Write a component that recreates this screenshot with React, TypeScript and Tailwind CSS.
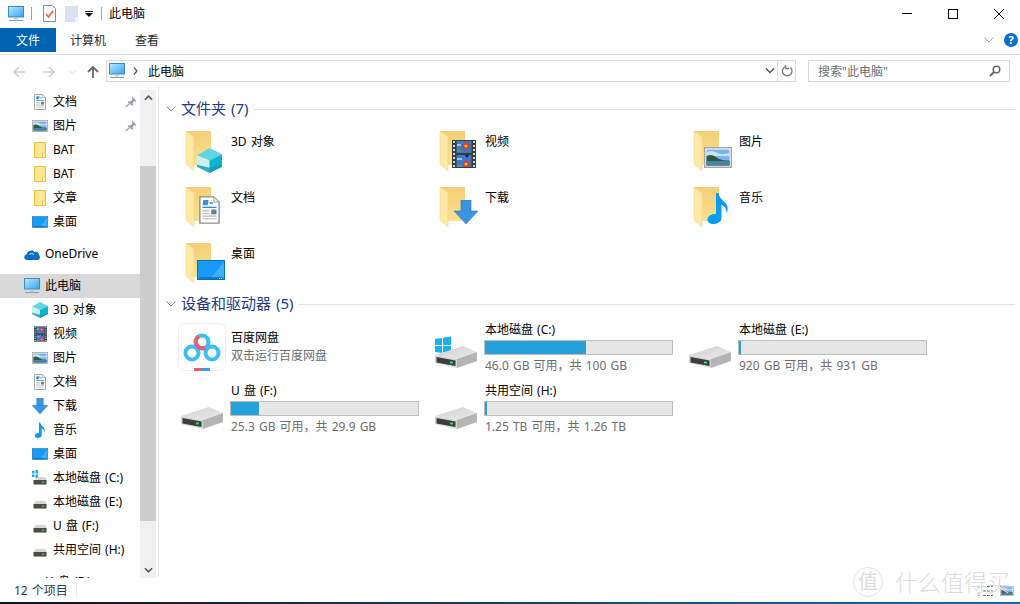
import { ReactNode } from "react";

const Monitor = () => (
  <svg viewBox="0 0 16 16" className="w-4 h-4 shrink-0">
    <rect x="0.5" y="0.5" width="15" height="10.5" fill="url(#screen)" stroke="#3a8cc4" />
    <rect x="6" y="11.5" width="4" height="2" fill="#b9c6d0" />
    <rect x="1" y="14" width="14" height="1" fill="#7f9db3" />
  </svg>
);

const Doc = () => (
  <svg viewBox="0 0 24 32" width="100%" height="100%">
    <path d="M1 1h16l6 6v24H1z" fill="#fff" stroke="#8f8f8f" strokeWidth="1.6" />
    <path d="M17 1v6h6" fill="#e4e4e4" stroke="#a0a0a0" />
    <path d="M5 4.5h6l-1 6H4z" fill="#3f8fd6" />
    <path d="M12 8h4M4 13h16" stroke="#2f86d0" strokeWidth="1.5" />
    <path d="M4 17h8M4 20h8M4 23h16M4 26h16" stroke="#b5b5b5" strokeWidth="1.3" />
    <rect x="14" y="15.5" width="6" height="5.5" fill="#5f8298" />
  </svg>
);

const Picture = () => (
  <svg viewBox="0 0 28 21" width="100%" height="100%">
    <rect x="0.7" y="0.7" width="26.6" height="19.6" fill="#fff" stroke="#a5a5a5" strokeWidth="1.4" />
    <rect x="2.5" y="2.5" width="23" height="16" fill="#79b4ee" />
    <path d="M2.5 5c4-2 8-1 11 1s8 1 12 0v3h-23z" fill="#cde3f5" />
    <path d="M2.5 9c4-2 7-1 10 1.5s8 3 13 3v5h-23z" fill="#2f5a3e" />
    <rect x="2.5" y="14" width="23" height="4.5" fill="#4c84a8" />
  </svg>
);

const Desktop = () => (
  <svg viewBox="0 0 28 20" width="100%" height="100%">
    <rect x="0.5" y="0.5" width="27" height="19" fill="#169bf8" stroke="#0d6fb0" />
    <path d="M14 18L27 2v16z" fill="#3db0fb" />
    <path d="M2 18h24" stroke="#0d6fb0" strokeWidth="1.5" />
    <path d="M22 18.5h4" stroke="#e8f6ff" strokeDasharray="1 1" />
  </svg>
);

const Cube = () => (
  <svg viewBox="0 0 24 24" width="100%" height="100%">
    <path d="M12 0L24 6 12 12 0 7z" fill="#5fd4e2" />
    <path d="M0 7l12 5v12L0 18z" fill="#c9eff3" />
    <path d="M24 6v12l-12 6V12z" fill="#10b4cf" />
    <path d="M0 16l12 3 12-3v2l-12 6-12-6z" fill="#0a9ab5" opacity="0.8" />
  </svg>
);

const Film = () => (
  <svg viewBox="0 0 24 28" width="100%" height="100%">
    <rect width="24" height="28" fill="#3a3a3a" />
    <path d="M1 2h2M1 6h2M1 10h2M1 14h2M1 18h2M1 22h2M1 26h2M21 2h2M21 6h2M21 10h2M21 14h2M21 18h2M21 22h2M21 26h2" stroke="#d5d5d5" strokeWidth="2" />
    <rect x="4.5" y="1" width="15" height="12" fill="#3a78c8" />
    <rect x="4.5" y="15" width="15" height="12" fill="#3a78c8" />
    <circle cx="14" cy="6" r="3.5" fill="#d83a2e" />
    <circle cx="14" cy="6" r="1.6" fill="#f2c21d" />
    <circle cx="14" cy="24" r="3.2" fill="#d83a2e" />
    <circle cx="14" cy="24" r="1.5" fill="#f2c21d" />
    <path d="M5 5h4M5 19h5" stroke="#9cc9ea" strokeWidth="2" />
    <path d="M5 11h4M5 26h5" stroke="#6f9c55" strokeWidth="1.5" />
    <path d="M13 15l2 3 2-3z" fill="#222" />
  </svg>
);

const DownArrow = () => (
  <svg viewBox="0 0 24 24" width="100%" height="100%">
    <path d="M7 0h10v11h7L12 24 0 11h7z" fill="#3b93e3" stroke="#2a78c4" strokeWidth="0.6" />
  </svg>
);

const Note = () => (
  <svg viewBox="0 0 22 32" width="100%" height="100%">
    <path d="M9 1h2.5c.5 4 3 6 6 9 3.500 3.500 4 7 2 12 .5-4-1-7-5-9.500V26c0 3.500-3.500 6-8 6-4 0-6-2-6-4.500C.5 24 4.500 21.500 9 22z" fill="#0a9cf0" />
  </svg>
);

const SmallFolder = () => (
  <svg viewBox="0 0 16 16" className="w-4 h-4 shrink-0">
    <rect x="2.5" y="0.5" width="11" height="15" fill="#ffe696" stroke="#efc23f" />
    <path d="M10.500 11h3v4.500h-3z" fill="#fff3c4" stroke="#efc23f" />
  </svg>
);

const SmallDrive = () => (
  <svg viewBox="0 0 16 16" className="w-4 h-4 shrink-0">
    <path d="M2 10l2-3h9l2 3z" fill="#d5d5d5" />
    <rect x="1.500" y="10" width="13" height="4" fill="#4a4a4a" />
    <rect x="1.500" y="14" width="13" height="1" fill="#9a9a9a" />
    <rect x="10" y="11.500" width="2" height="1.500" fill="#3fd25b" />
  </svg>
);

const SmallWinDrive = () => (
  <svg viewBox="0 0 16 16" className="w-4 h-4 shrink-0">
    <path d="M0 1h2.500v2.500H0zM3.500 0H6v3.500H3.500zM0 4.500h2.500V7H0zM3.500 4.500H6V8H3.500z" fill="#17a5e8" />
    <path d="M4 9l1-2h8l2 3v0H3z" fill="#d5d5d5" />
    <rect x="1.500" y="10" width="13" height="4" fill="#4a4a4a" />
    <rect x="1.500" y="14" width="13" height="1" fill="#9a9a9a" />
    <rect x="10" y="11.500" width="2" height="1.500" fill="#3fd25b" />
  </svg>
);

const Cloud = () => (
  <svg viewBox="0 0 16 16" className="w-4 h-4 shrink-0">
    <path d="M3 14c-3.500 0-3.500-5-.5-5.500C3.500 5 8 3 10.500 6c2-1 4.500 0 4.500 3 1.500 1 1 5-1 5z" fill="#0a6fc4" />
    <path d="M5.500 9C6.500 7 9 7 10 9" stroke="#fff" fill="none" />
  </svg>
);

const Pin = () => (
  <svg viewBox="0 0 12 12" className="w-3 h-3 shrink-0">
    <path d="M7 .5l4.500 4.500-1 .5-1-.5-2 2 .5 2-1 1L2.500 6l1-1 2 .5 2-2-.5-1z" fill="#9a9fa6" />
    <path d="M4 8L1 11" stroke="#9a9fa6" strokeWidth="1.200" />
  </svg>
);

const Box = ({ w, h, children }: { w: string; h: string; children: ReactNode }) => (
  <span className="flex items-center justify-center shrink-0 w-4 h-4">
    <span className={`block ${w} ${h}`}>{children}</span>
  </span>
);

const navItems: { label: string; icon: ReactNode; pin?: boolean }[] = [
  { label: "文档", icon: <Box w="w-3" h="h-4"><Doc /></Box>, pin: true },
  { label: "图片", icon: <Box w="w-4" h="h-3"><Picture /></Box>, pin: true },
  { label: "BAT", icon: <SmallFolder /> },
  { label: "BAT", icon: <SmallFolder /> },
  { label: "文章", icon: <SmallFolder /> },
  { label: "桌面", icon: <Box w="w-4" h="h-3"><Desktop /></Box> },
];

const pcItems: { label: string; icon: ReactNode }[] = [
  { label: "3D 对象", icon: <Cube /> },
  { label: "视频", icon: <Box w="w-[13px]" h="h-4"><Film /></Box> },
  { label: "图片", icon: <Box w="w-4" h="h-3"><Picture /></Box> },
  { label: "文档", icon: <Box w="w-3" h="h-4"><Doc /></Box> },
  { label: "下载", icon: <DownArrow /> },
  { label: "音乐", icon: <Box w="w-3" h="h-4"><Note /></Box> },
  { label: "桌面", icon: <Box w="w-4" h="h-3"><Desktop /></Box> },
  { label: "本地磁盘 (C:)", icon: <SmallWinDrive /> },
  { label: "本地磁盘 (E:)", icon: <SmallDrive /> },
  { label: "U 盘 (F:)", icon: <SmallDrive /> },
  { label: "共用空间 (H:)", icon: <SmallDrive /> },
];

function NavRow({ label, icon, pin }: { label: string; icon: ReactNode; pin?: boolean }) {
  return (
    <div className="h-6 flex items-center pl-8 shrink-0 text-black">
      <span className="block w-4 h-4 shrink-0">{icon}</span>
      <span className="ml-[5px] whitespace-nowrap">{label}</span>
      {pin && <span className="ml-auto mr-[3px]"><Pin /></span>}
    </div>
  );
}

function Sidebar() {
  return (
    <div className="w-[159px] shrink-0 flex border-r border-[#e6e6e6] overflow-hidden">
      <div className="w-[140px] shrink-0 flex flex-col pt-[4px] overflow-hidden">
        {navItems.map((item, i) => <NavRow key={i} {...item} />)}
        <div className="h-6 mt-2 flex items-center pl-6 shrink-0 text-black">
          <Cloud />
          <span className="ml-[5px]">OneDrive</span>
        </div>
        <div className="h-6 mt-2 flex items-center pl-6 shrink-0 bg-[#d9d9d9] text-black">
          <Monitor />
          <span className="ml-[5px]">此电脑</span>
        </div>
        {pcItems.map((item, i) => <NavRow key={i} {...item} />)}
        <div className="h-6 mt-2 flex items-center pl-6 shrink-0 text-black">
          <SmallDrive />
          <span className="ml-[5px]">U 盘 (F:)</span>
        </div>
      </div>
      <div className="w-[16px] mt-[4px] bg-[#f0f0f0] flex flex-col shrink-0">
        <div className="h-4 flex items-center justify-center">
          <svg viewBox="0 0 10 6" className="w-[9px] h-[6px]"><path d="M1 5l4-4 4 4" fill="none" stroke="#555" strokeWidth="1.800" /></svg>
        </div>
        <div className="h-[60px]" />
        <div className="h-[355px] bg-[#cdcdcd]" />
        <div className="flex-1" />
        <div className="h-[17px] flex items-center justify-center">
          <svg viewBox="0 0 10 6" className="w-[9px] h-[6px]"><path d="M1 1l4 4 4-4" fill="none" stroke="#555" strokeWidth="1.800" /></svg>
        </div>
      </div>
    </div>
  );
}

function BigFolder({ children }: { children: ReactNode }) {
  return (
    <div className="relative w-[48px] h-[48px] shrink-0">
      <svg viewBox="0 0 48 48" className="absolute inset-0 w-full h-full">
        <path d="M8 3h25v34H16z" fill="url(#folderBack)" />
        <path d="M8 3l8 6v34l-8-7z" fill="#ffe9a6" />
        <path d="M8 3l8 6v34l-8-7z" fill="none" stroke="#f3d27f" strokeWidth="0.500" />
      </svg>
      {children}
    </div>
  );
}

const folders: { label: string; overlay: ReactNode }[] = [
  { label: "3D 对象", overlay: <div className="absolute left-[19px] top-[20px] w-[25px] h-[25px]"><Cube /></div> },
  { label: "视频", overlay: <div className="absolute left-[20px] top-[12px] w-[24px] h-[28px]"><Film /></div> },
  { label: "图片", overlay: <div className="absolute left-[18px] top-[19px] w-[28px] h-[21px]"><Picture /></div> },
  { label: "文档", overlay: <div className="absolute left-[21px] top-[12px] w-[21px] h-[28px]"><Doc /></div> },
  { label: "下载", overlay: <div className="absolute left-[22px] top-[16px] w-[24px] h-[24px]"><DownArrow /></div> },
  { label: "音乐", overlay: <div className="absolute left-[21px] top-[8px] w-[22px] h-[32px]"><Note /></div> },
  { label: "桌面", overlay: <div className="absolute left-[19px] top-[20px] w-[28px] h-[20px]"><Desktop /></div> },
];

function BigDrive({ win }: { win?: boolean }) {
  return (
    <svg viewBox="0 0 48 48" className="w-[48px] h-[48px] shrink-0">
      {win && (
        <path d="M3 7l7-1v7H3zM11 5.800l8-1.300V13h-8zM3 14h7v7l-7-1zM11 14h8v8.500l-8-1.300z" fill="#17b0ee" />
      )}
      <path d="M3 23l28-9 14 6-20 7z" fill="url(#driveTop)" />
      <path d="M25 27l20-7v9l-20 7z" fill="#b4b4b4" />
      <path d="M3 23l22 4v9L3 31z" fill="#d6d6d6" />
      <path d="M4.500 25l19 3.500v5.500l-19-3.500z" fill="#3d3d3d" />
      <rect x="18" y="29.500" width="3" height="2" fill="#3fe05f" />
    </svg>
  );
}

const drives = [
  { name: "本地磁盘 (C:)", used: 101, info: "46.0 GB 可用，共 100 GB", win: true },
  { name: "本地磁盘 (E:)", used: 2, info: "920 GB 可用，共 931 GB" },
  { name: "U 盘 (F:)", used: 28, info: "25.3 GB 可用，共 29.9 GB" },
  { name: "共用空间 (H:)", used: 2, info: "1.25 TB 可用，共 1.26 TB" },
];

function DriveTile({ name, used, info, win }: { name: string; used: number; info: string; win?: boolean }) {
  return (
    <div className="flex h-[61px]">
      <div className="w-[52px] pt-[12px] shrink-0"><BigDrive win={win} /></div>
      <div className="flex flex-col pt-[2px]">
        <div className="h-4 leading-4 text-black pl-px whitespace-nowrap">{name}</div>
        <div className="w-[189px] h-[15px] mt-[2px] bg-[#e6e6e6] border border-[#bcbcbc] overflow-hidden">
          <div className="h-full bg-[#26a0da]" style={{ width: used }} />
        </div>
        <div className="h-4 leading-4 mt-[3px] text-[#6d6d6d] pl-px whitespace-nowrap">{info}</div>
      </div>
    </div>
  );
}

function GroupHeader({ title }: { title: string }) {
  return (
    <div className="h-[22px] flex items-center pl-[7px] pr-[5px]">
      <svg viewBox="0 0 10 6" className="w-[10px] h-[6px] shrink-0">
        <path d="M.5 .5L5 5 9.500 .5" fill="none" stroke="#8a8a8a" />
      </svg>
      <span className="ml-[5px] pb-[2px] text-[15px] text-[#1e3a8a] whitespace-nowrap">{title}</span>
      <div className="ml-[5px] flex-1 h-px bg-[#e2e2e2]" />
    </div>
  );
}

function Baidu() {
  return (
    <svg viewBox="0 0 48 48" className="w-[48px] h-[48px] shrink-0">
      <rect x="0.500" y="0.500" width="47" height="47" rx="6" fill="#fff" stroke="#efefef" />
      <circle cx="14" cy="30" r="6.500" fill="none" stroke="#3fbdf6" strokeWidth="4" />
      <circle cx="34" cy="30" r="6.500" fill="none" stroke="#3fbdf6" strokeWidth="4" />
      <circle cx="24" cy="19" r="6.500" fill="none" stroke="#3fbdf6" strokeWidth="4" />
      <path d="M20.750 13.400A6.500 6.500 0 0 0 27.250 24.600" fill="none" stroke="#f3586b" strokeWidth="4" />
      <rect x="16" y="45" width="8" height="3" fill="#f3586b" />
      <rect x="24" y="45" width="8" height="3" fill="#2fa0f0" />
    </svg>
  );
}

function Main() {
  return (
    <div className="flex-1 flex flex-col pt-[12px] overflow-hidden">
      <GroupHeader title="文件夹 (7)" />
      <div className="mt-[4px] ml-[19px] grid grid-cols-[254px_254px_254px] auto-rows-[56px]">
        {folders.map((f) => (
          <div key={f.label} className="flex pt-[4px]">
            <BigFolder>{f.overlay}</BigFolder>
            <span className="ml-[5px] text-black leading-4 mt-[6px]">{f.label}</span>
          </div>
        ))}
      </div>
      <div className="mt-px">
        <GroupHeader title="设备和驱动器 (5)" />
      </div>
      <div className="mt-[5px] ml-[19px] grid grid-cols-[254px_254px_254px] auto-rows-[61px]">
        <div className="flex pt-[3px]">
          <Baidu />
          <div className="ml-[5px] flex flex-col pt-[7px]">
            <span className="leading-4 text-black">百度网盘</span>
            <span className="leading-4 mt-[2px] text-[#6d6d6d]">双击运行百度网盘</span>
          </div>
        </div>
        {drives.map((d) => <DriveTile key={d.name} {...d} />)}
      </div>
    </div>
  );
}

export default function App() {
  return (
    <div className="relative w-[1020px] h-[604px] bg-white flex flex-col overflow-hidden text-[12px] [word-spacing:1px] font-['Noto_Sans','Noto_Sans_CJK_SC',sans-serif]">
      <svg className="absolute w-0 h-0">
        <defs>
          <linearGradient id="screen" x1="0" y1="0" x2="1" y2="1">
            <stop offset="0" stopColor="#bfe8ff" />
            <stop offset="1" stopColor="#2fa4f0" />
          </linearGradient>
          <linearGradient id="folderBack" x1="0" y1="0" x2="0" y2="1">
            <stop offset="0" stopColor="#f3cf76" />
            <stop offset="1" stopColor="#fbe08f" />
          </linearGradient>
          <linearGradient id="driveTop" x1="0" y1="0" x2="1" y2="1">
            <stop offset="0" stopColor="#cfcfcf" />
            <stop offset="1" stopColor="#ececec" />
          </linearGradient>
        </defs>
      </svg>

      {/* title bar */}
      <div className="h-[27px] flex items-center shrink-0 pl-2">
        <Monitor />
        <div className="ml-[7px] w-px h-[13px] bg-[#a0a0a0]" />
        <svg viewBox="0 0 13 17" className="ml-[11px] w-[13px] h-[17px]">
          <path d="M.5 .5h9l3 3v13H.5z" fill="#fff" stroke="#8a8a8a" />
          <path d="M3 9l2.500 3L10 6" fill="none" stroke="#e8602c" strokeWidth="1.500" />
        </svg>
        <svg viewBox="0 0 13 16" className="ml-[9px] w-[13px] h-4">
          <path d="M0 0h13v16H0z" fill="#d8e3f2" />
          <path d="M10 11h3v5h-3z" fill="#f1f5fa" />
        </svg>
        <svg viewBox="0 0 8 6" className="ml-[7px] w-2 h-[6px]">
          <path d="M0 0h8v1H0zM0 2h8L4 6z" fill="#111" />
        </svg>
        <div className="ml-2 w-px h-[13px] bg-[#a0a0a0]" />
        <span className="ml-[7px] text-black">此电脑</span>
        <div className="ml-auto -mr-[2px] flex items-center h-full">
          <div className="w-[46px] flex justify-center"><div className="w-[10px] h-px bg-black" /></div>
          <div className="w-[46px] flex justify-center"><div className="w-[10px] h-[10px] border border-black" /></div>
          <div className="w-[46px] flex justify-center">
            <svg viewBox="0 0 10 10" className="w-[10px] h-[10px]"><path d="M0 0l10 10M10 0L0 10" stroke="#000" /></svg>
          </div>
        </div>
      </div>

      {/* ribbon tabs */}
      <div className="h-[28px] shrink-0 flex items-start border-b border-[#dadbdc] pt-px relative">
        <div className="w-[56px] h-[24px] bg-[#0063b1] text-white flex items-center justify-center pt-px">文件</div>
        <span className="ml-[14px] h-[24px] leading-[26px] text-[#262626]">计算机</span>
        <span className="ml-[29px] h-[24px] leading-[26px] text-[#262626]">查看</span>
        <div className="ml-auto flex items-center h-[24px] pr-[2px]">
          <svg viewBox="0 0 10 6" className="w-[10px] h-[6px]"><path d="M.5 .5L5 5 9.500 .5" fill="none" stroke="#a5a5a5" /></svg>
          <div className="ml-[10px] w-[14px] h-[14px] rounded-full bg-[#0a6fc9] text-white text-[11px] font-bold leading-[14px] text-center">?</div>
        </div>
      </div>

      {/* address bar */}
      <div className="h-[31px] shrink-0 flex items-start pt-[5px]">
        <div className="w-[106px] h-[22px] shrink-0 flex items-center pt-[2px]">
          <svg viewBox="0 0 12 12" className="ml-[13px] w-3 h-3"><path d="M12 6H1M6 1L1 6l5 5" fill="none" stroke="#cfcfcf" strokeWidth="1.600" /></svg>
          <svg viewBox="0 0 12 12" className="ml-[18px] w-3 h-3"><path d="M0 6h11M6 1l5 5-5 5" fill="none" stroke="#cfcfcf" strokeWidth="1.600" /></svg>
          <svg viewBox="0 0 8 5" className="ml-[14px] w-[7px] h-[5px]"><path d="M.5 .5L4 4 7.500 .5" fill="none" stroke="#cfcfcf" /></svg>
          <svg viewBox="0 0 12 12" className="ml-[11px] w-3 h-3"><path d="M6 12V1M1 6l5-5 5 5" fill="none" stroke="#6b6b6b" strokeWidth="1.800" /></svg>
        </div>
        <div className="w-[690px] h-[22px] border border-[#d9d9d9] flex items-center pl-[2px] shrink-0">
          <Monitor />
          <svg viewBox="0 0 5 8" className="ml-2 w-[5px] h-2"><path d="M1 .5L4 4 1 7.500" fill="none" stroke="#555" strokeWidth="1.200" /></svg>
          <span className="ml-[10px] pt-px text-black">此电脑</span>
          <svg viewBox="0 0 10 6" className="ml-auto w-[10px] h-[6px]"><path d="M1 .5L5 4.500 9 .5" fill="none" stroke="#555" strokeWidth="1.500" /></svg>
          <div className="ml-[2px] w-px h-full bg-[#d9d9d9]" />
          <svg viewBox="0 0 12 12" className="ml-[3px] mr-[2px] w-3 h-3">
            <path d="M9.500 2.500A4.800 4.800 0 1 1 4.500 1.500M4.500 0v3.500H8" fill="none" stroke="#777" strokeWidth="1.300" />
          </svg>
        </div>
        <div className="ml-3 w-[202px] h-[22px] border border-[#d9d9d9] flex items-center pl-[9px] shrink-0 text-[#6d6d6d]">
          <span className="pt-px">搜索"此电脑"</span>
          <svg viewBox="0 0 12 12" className="ml-auto mr-2 w-3 h-3">
            <circle cx="7.500" cy="4.500" r="3.300" fill="none" stroke="#666" strokeWidth="1.500" />
            <path d="M5 7l-4 4" stroke="#666" strokeWidth="2" />
          </svg>
        </div>
      </div>

      {/* body */}
      <div className="flex-1 flex min-h-0">
        <Sidebar />
        <Main />
      </div>

      {/* status bar */}
      <div className="h-[24px] shrink-0 flex items-center pl-[14px] text-[#1e395b]">
        <span className="pt-[2px]">12 个项目</span>
        <div className="ml-[8px] w-px h-[16px] bg-[#eeeeee]" />
        <div className="ml-auto flex items-center pr-[6px] pt-px">
          <svg viewBox="0 0 16 12" className="w-4 h-3">
            <rect x="0" y="0.500" width="3" height="3" fill="#cfe0f0" />
            <rect x="0" y="8" width="3" height="3" fill="#f0c8c8" />
            <path d="M6 1.500h10M6 6h10M6 10.500h10" stroke="#6d6d6d" strokeDasharray="3 1" />
          </svg>
          <div className="ml-[7px] w-[14px] h-[10px]"><Picture /></div>
        </div>
      </div>
      <div className="h-[2px] shrink-0 bg-gradient-to-r from-[#0a1622] to-[#0a6fb8]" />

      {/* watermark */}
      <div className="absolute left-[853px] top-[565px] flex items-center text-[#dcdcdc] pointer-events-none">
        <div className="w-[30px] h-[30px] rounded-full border border-[#e2e2e2] flex items-center justify-center text-[20px]">值</div>
        <span className="ml-[12px] text-[23px] font-light whitespace-nowrap">什么值得买</span>
      </div>
    </div>
  );
}
